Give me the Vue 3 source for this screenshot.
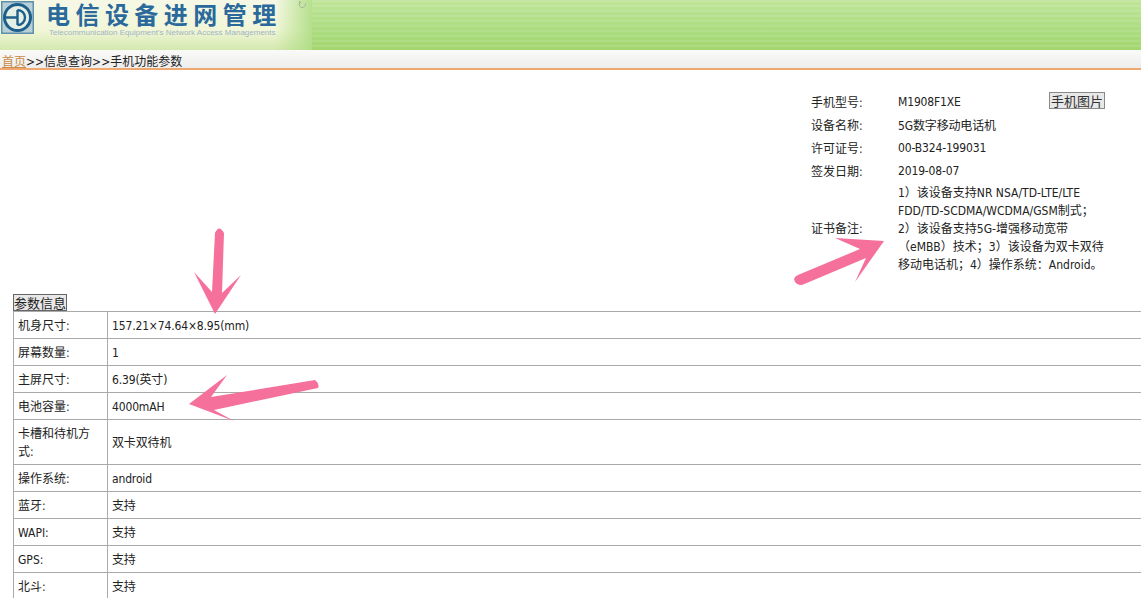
<script setup>
const info = [
  ['手机型号:', 'M1908F1XE'],
  ['设备名称:', '5G数字移动电话机'],
  ['许可证号:', '00-B324-199031'],
  ['签发日期:', '2019-08-07'],
]
const remark = [
  '1）该设备支持NR NSA/TD-LTE/LTE',
  'FDD/TD-SCDMA/WCDMA/GSM制式；',
  '2）该设备支持5G-增强移动宽带',
  '（eMBB）技术；3）该设备为双卡双待',
  '移动电话机；4）操作系统：Android。',
]
const params = [
  ['机身尺寸:', '157.21×74.64×8.95(mm)'],
  ['屏幕数量:', '1'],
  ['主屏尺寸:', '6.39(英寸)'],
  ['电池容量:', '4000mAH'],
  ['卡槽和待机方式:', '双卡双待机'],
  ['操作系统:', 'android'],
  ['蓝牙:', '支持'],
  ['WAPI:', '支持'],
  ['GPS:', '支持'],
  ['北斗:', '支持'],
]
</script>

<template>
  <div class="page">
    <header class="banner">
      <div class="brand">
        <svg class="logo" width="33" height="33" viewBox="0 0 33 33">
          <rect x="0.5" y="0.5" width="32" height="32" fill="#b9d0d8" stroke="#5f90ab" stroke-width="2" />
          <circle cx="16.5" cy="16.5" r="13" fill="#e4efe6" stroke="#1d5f8a" stroke-width="3" />
          <path d="M4 16.5H17M16.5 9V24M16.5 9a7.5 7.5 0 0 1 0 15" fill="none" stroke="#1d5f8a" stroke-width="2.4" />
        </svg>
        <div class="titles">
          <div class="title">电信设备进网管理</div>
          <div class="subtitle">Telecommunication Equipment's Network Access Managements</div>
        </div>
        <svg class="swirl" width="9" height="9" viewBox="0 0 9 9">
          <path d="M2 2.2A3.2 3.2 0 1 0 7.4 3.4M1.6 0.8V2.6H3.4" fill="none" stroke="#a9b39c" stroke-width="1" />
        </svg>
      </div>
    </header>
    <nav class="crumb"><a class="home">首页</a>&gt;&gt;信息查询&gt;&gt;手机功能参数</nav>

    <section class="info">
      <div class="info-grid">
        <template v-for="(row, i) in info" :key="row[0]">
          <div class="lab">{{ row[0] }}</div>
          <div class="val"><span>{{ row[1] }}</span><span v-if="i === 0" class="photo">手机图片</span></div>
        </template>
        <div class="lab remark-lab">证书备注:</div>
        <div class="remark">
          <div v-for="line in remark" :key="line">{{ line }}</div>
        </div>
      </div>
    </section>

    <div class="legend">参数信息</div>
    <div class="table">
      <div v-for="row in params" :key="row[0]" class="row">
        <div class="cell key">{{ row[0] }}</div>
        <div class="cell value">{{ row[1] }}</div>
      </div>
    </div>

    <svg class="arrows" width="1141" height="598" viewBox="0 0 1141 598">
      <g fill="#f6709c">
        <path d="M215 233 Q219 224 224 233 L222 293 L241 275 L215 314 L194 272 L212 292 Z" />
        <path d="M189 404 L227 375 L211 397 L315 380 Q320 384 318 388 L214 410 L234 421 Z" />
        <path d="M794 279 Q795 276 798 275 L860 249 L835 238 L884 241 L855 282 L866 258 L802 285 Q795 285 794 279 Z" />
      </g>
    </svg>
  </div>
</template>

<style>
html, body { margin: 0; background: #fff; overflow: hidden; }
</style>

<style scoped>
.page {
  position: relative;
  width: 1141px;
  height: 598px;
  overflow: hidden;
  font-family: "DejaVu Sans Condensed", "Noto Sans CJK SC", sans-serif;
  font-size: 12px;
  color: #222;
}
.banner {
  height: 50px;
  background:
    repeating-linear-gradient(180deg, rgba(255,255,255,0.10) 0 2px, rgba(255,255,255,0) 2px 5px),
    linear-gradient(180deg, #c0e59a 0%, #aedd83 50%, #a3d670 100%);
}
.brand {
  position: relative;
  width: 312px;
  height: 50px;
  display: flex;
  box-sizing: border-box;
  padding: 1px 0 0 1px;
  gap: 12px;
  background:
    linear-gradient(90deg, rgba(0,0,0,0) 88%, rgba(174,221,131,0.9) 100%),
    linear-gradient(180deg, #f6f8e6 0%, #f1f6d8 60%, #d3e8ae 100%);
}
.titles { display: flex; flex-direction: column; }
.title {
  font-family: "Noto Sans CJK SC", sans-serif;
  font-size: 24px;
  line-height: 26px;
  font-weight: 700;
  letter-spacing: 5.45px;
  color: #2a699b;
  white-space: nowrap;
}
.subtitle {
  font-family: "Liberation Sans", sans-serif;
  font-size: 8px;
  line-height: 10px;
  color: #9fb4c4;
  margin: 1px 0 0 3px;
  white-space: nowrap;
}
.swirl { position: absolute; left: 298px; top: 0; }
.crumb {
  height: 16px;
  padding: 2px 0 0 2px;
  line-height: 21px;
  font-size: 12px;
  color: #222;
  background: linear-gradient(180deg, #fafaf8, #ededed);
  border-bottom: 2px solid #efa86f;
  white-space: nowrap;
}
.home { color: #c98a45; text-decoration: underline; }
.info {
  height: 224px;
  box-sizing: border-box;
  padding-top: 20px;
  display: flex;
  justify-content: flex-end;
}
.info-grid {
  width: 330px;
  display: grid;
  grid-template-columns: 87px 207px;
  grid-template-rows: repeat(4, 23px) auto;
  align-items: center;
  align-content: start;
}
.val {
  display: flex;
  justify-content: space-between;
  align-items: center;
  white-space: nowrap;
  letter-spacing: -0.15px;
}
.photo {
  margin-top: -2px;
  line-height: 15px;
  font-size: 13px;
  letter-spacing: 0;
  background: #e8e8e8;
  border: 1px solid #888;
  padding: 0 1px;
  color: #333;
  font-family: "Noto Sans CJK SC", sans-serif;
}
.remark-lab { margin-bottom: 2px; }
.remark {
  padding-top: 2px;
  line-height: 18px;
  white-space: nowrap;
}
.legend {
  display: block;
  width: fit-content;
  margin-left: 13px;
  height: 15px;
  line-height: 15px;
  font-size: 13px;
  background: #e8e8e8;
  border: 1px solid #666;
  font-family: "Noto Sans CJK SC", sans-serif;
}
.table {
  margin-left: 13px;
  border-top: 1px solid #aaa;
  border-left: 1px solid #aaa;
}
.row {
  display: grid;
  grid-template-columns: 94px 1fr;
  border-bottom: 1px solid #aaa;
}
.cell {
  display: flex;
  align-items: center;
  padding: 5px 4px 3px;
  line-height: 18px;
}
.key { border-right: 1px solid #aaa; }
.value { letter-spacing: -0.15px; }
.arrows { position: absolute; left: 0; top: 0; pointer-events: none; }
</style>
